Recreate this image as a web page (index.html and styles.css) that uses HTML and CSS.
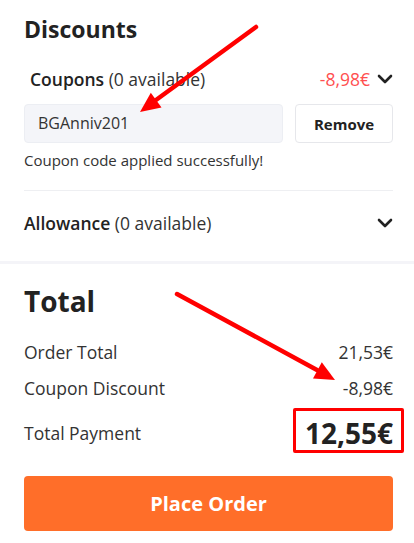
FILE: index.html
```html
<!DOCTYPE html>
<html lang="en">
<head>
<meta charset="utf-8">
<title>Checkout</title>
<link rel="stylesheet" href="styles.css">
</head>
<body>
<div class="page">
  <section class="discounts">
    <h2 class="title">Discounts</h2>
    <div class="row coupons-row">
      <div class="label"><span class="strong">Coupons</span> (0 available)</div>
      <div class="right">
        <span class="neg">-8,98€</span>
        <svg class="chev" width="16" height="10" viewBox="0 0 16 10"><polyline points="2,2 8,8 14,2" fill="none" stroke="#222" stroke-width="2.6" stroke-linecap="round" stroke-linejoin="round"/></svg>
      </div>
    </div>
    <div class="code-row">
      <div class="code-input">BGAnniv201</div>
      <button class="remove">Remove</button>
    </div>
    <div class="success">Coupon code applied successfully!</div>
    <div class="divider"></div>
    <div class="row allowance-row">
      <div class="label"><span class="strong">Allowance</span> (0 available)</div>
      <svg class="chev" width="16" height="10" viewBox="0 0 16 10"><polyline points="2,2 8,8 14,2" fill="none" stroke="#222" stroke-width="2.6" stroke-linecap="round" stroke-linejoin="round"/></svg>
    </div>
  </section>
  <div class="band"></div>
  <section class="total">
    <h2 class="title big">Total</h2>
    <div class="line first"><span>Order Total</span><span>21,53€</span></div>
    <div class="line"><span>Coupon Discount</span><span>-8,98€</span></div>
    <div class="line pay"><span>Total Payment</span><span class="amount">12,55€</span></div>
    <button class="place">Place Order</button>
  </section>
  <svg class="arrows" width="414" height="543" viewBox="0 0 414 543">
    <line x1="256" y1="27" x2="156" y2="100" stroke="#f00" stroke-width="4.5" stroke-linecap="round"/>
    <polygon points="140,112 161.5,107.5 150.8,92.8" fill="#f00"/>
    <line x1="177" y1="294" x2="317" y2="370" stroke="#f00" stroke-width="4.5" stroke-linecap="round"/>
    <polygon points="335,380 313,378.5 321.8,362.3" fill="#f00"/>
  </svg>
</div>
</body>
</html>
```
FILE: styles.css
```css
html, body {
  margin: 0;
  padding: 0;
  background: #fff;
}
body {
  font-family: "Open Sans", "Liberation Sans", sans-serif;
  color: #333;
}
.page {
  position: relative;
  width: 414px;
  height: 543px;
  overflow: hidden;
}
.discounts, .total {
  padding: 0 21px 0 24px;
}
.discounts {
  padding-top: 14px;
}
.title {
  margin: 0;
  font-size: 23px;
  line-height: 30px;
  font-weight: 700;
  color: #222;
}
.title.big {
  font-size: 28px;
  line-height: 38px;
}
.row {
  display: flex;
  justify-content: space-between;
  align-items: center;
  height: 28px;
  font-size: 17.5px;
}
.coupons-row {
  margin-top: 21px;
  padding-left: 6px;
}
.strong {
  font-weight: 600;
  color: #222;
}
.right {
  display: flex;
  align-items: center;
  gap: 7px;
}
.neg {
  color: #ff4f4f;
}
.chev {
  display: block;
}
.code-row {
  display: flex;
  gap: 12px;
  margin-top: 11px;
  height: 39px;
}
.code-input {
  flex: 1;
  background: #f4f5f9;
  border: 1px solid #eceef3;
  border-radius: 4px;
  font-size: 16px;
  line-height: 37px;
  padding-left: 13px;
  color: #333;
}
.remove {
  width: 98px;
  background: #fff;
  border: 1px solid #e6e7eb;
  border-radius: 4px;
  font-family: inherit;
  font-size: 15px;
  font-weight: 700;
  color: #222;
  padding: 0;
}
.success {
  margin-top: 8px;
  font-size: 15px;
  line-height: 18px;
  color: #333;
}
.divider {
  margin-top: 21px;
  height: 1px;
  background: #eeeff2;
}
.allowance-row {
  margin-top: 18px;
}
.band {
  margin-top: 24px;
  height: 3px;
  background: #f4f4f8;
}
.total .title {
  margin-top: 18px;
}
.line {
  display: flex;
  justify-content: space-between;
  align-items: center;
  font-size: 17.5px;
  line-height: 24px;
  margin-top: 12px;
  color: #333;
}
.line.first {
  margin-top: 20px;
}
.line.pay {
  height: 42px;
}
.amount {
  position: relative;
  font-size: 28px;
  font-weight: 700;
  line-height: 42px;
  color: #222;
}
.amount::after {
  content: "";
  position: absolute;
  top: -4px;
  bottom: 1px;
  left: -12px;
  right: -11px;
  border: 3px solid #f00;
  border-radius: 2px;
}
.place {
  display: block;
  width: 100%;
  margin-top: 22px;
  height: 55px;
  border: 0;
  border-radius: 4px;
  background: #ff6e29;
  color: #fff;
  font-family: inherit;
  font-size: 20px;
  font-weight: 700;
}
.arrows {
  position: absolute;
  left: 0;
  top: 0;
  pointer-events: none;
}
```
